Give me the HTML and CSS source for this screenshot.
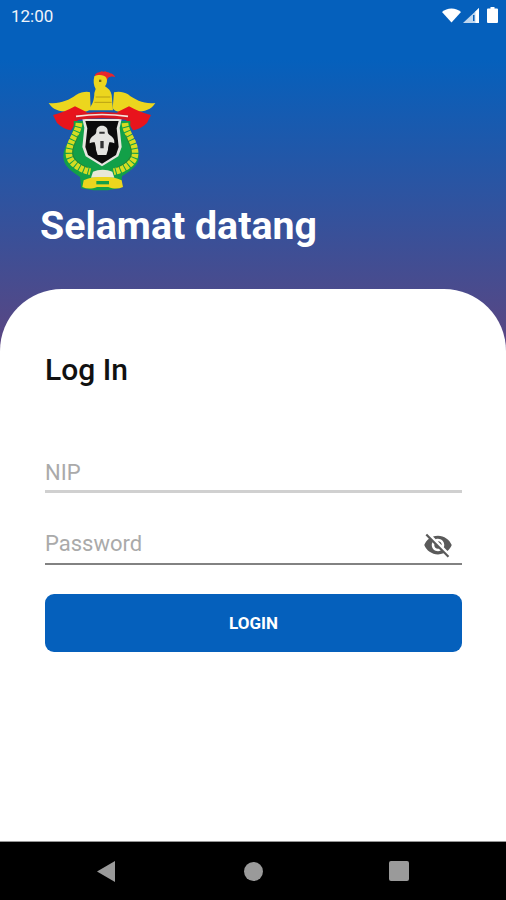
FILE: index.html
```html
<!DOCTYPE html>
<html>
<head>
   <meta charset="utf-8">
   <title>Selamat datang</title>
   <link rel="stylesheet" href="styles.css">
</head>
<body>
<div class="screen">

   <!-- status bar -->
   <div class="statusBar">
      <span class="clock">12:00</span>
      <span class="statusIcons">
         <svg class="wifi" width="19" height="15" viewBox="0 0 19 14"><path d="M0 3.500C2.500 1.200 5.800 0 9.500 0s7 1.200 9.500 3.500L9.500 14z" fill="#fff"/></svg>
         <svg class="signal" width="16" height="15" viewBox="0 0 16 15"><path d="M16 0v15H0z" fill="#fff" opacity=".75"/><path d="M16 0v15h-3.500V3.500z" fill="#fff"/><path d="M10 7h1.500v6H10z" fill="#0560bc"/></svg>
         <svg width="11" height="16" viewBox="0 0 11 16"><path d="M3.500 0h4v1.500H10a1 1 0 0 1 1 1V15a1 1 0 0 1-1 1H1a1 1 0 0 1-1-1V2.500a1 1 0 0 1 1-1h2.500z" fill="#fff"/></svg>
      </span>
   </div>

   <!-- logo and greeting -->
   <div class="hero">
      <svg class="crest" width="110" height="124" viewBox="50 25 330 372">
         <!-- rooster -->
         <path d="M193 47c6-10 16-8 20-12 6 2 8 2 12 0 6 4 10 2 14 6 6 0 12 4 16 12-8-4-16-2-22 2l-4 10-26-6z" fill="#e8262c"/>
         <path d="M192 50c10-6 30-6 36 4 4 8 2 18-4 26 10 6 18 14 20 26l4 46H172c14-14 20-32 20-52l4-12c-6-10-8-24-4-38z" fill="#ecd61e"/>
         <path d="M206 60h7v7h-7z" fill="#7a6a10"/>
         <path d="M196 112h44M192 128h52" stroke="#b8a014" stroke-width="3" fill="none"/>
         <!-- wings -->
         <path d="M55 130c32 4 60-8 82-24 14-8 32-12 42-8l2 48c-6 8-12 10-20 10l-48 0c-26 0-46-6-58-26z" fill="#ecd61e"/>
         <path d="M375 130c-32 4-60-8-82-26-12-8-30-10-42-6l-4 48c6 8 14 10 22 10h48c26 0 46-6 58-26z" fill="#ecd61e"/>
         <!-- ribbon -->
         <path d="M68 166c20-4 46-14 66-26l36 18-30 26-18 28c-14-2-30-10-42-22l-6-12z" fill="#e8141c"/>
         <path d="M362 166c-20-4-46-14-66-26l-36 18 30 26 18 28c14-2 30-10 42-22l6-12z" fill="#e8141c"/>
         <!-- green shield -->
         <path d="M130 184l170 0c-2 22 2 40 10 56 8 16 16 30 15 50 1 24-14 36-50 60l-2 34-40 8h-44l-36-6-4-34c-30-20-50-34-50-62 0-18 8-32 16-46 10-20 17-38 15-60z" fill="#12a048"/>
         <!-- wreaths -->
         <path d="M146 190c-2 32-32 56-30 94 2 28 36 46 64 52M284 190c2 32 32 56 30 94-2 28-36 46-64 52" fill="none" stroke="#d6dc22" stroke-width="20" stroke-dasharray="11 3"/>
         <path d="M144 226c-6 20-20 36-16 60 4 16 24 30 44 38M286 226c6 20 20 36 16 60-4 16-24 30-44 38" fill="none" stroke="#2e7a2a" stroke-width="2.500"/>
         <!-- black shield -->
         <path d="M156 178h118l-6 26 6 58-10 28-49 30-49-30-10-28 6-58z" fill="#e6e6e0"/>
         <path d="M165 184h100l-6 22 6 56-8 24-42 26-42-26-8-24 6-56z" fill="#0c0c0c"/>
         <path d="M215 198c11 0 18 8 17 17 0 6 3 10 7 12 9 5 14 12 13 24-6-3-10-4-15-3-2 8-4 14-4 22l-5 16h-26l-5-16c0-8-2-14-4-22-5-1-9 0-15 3-1-12 4-19 13-24 4-2 7-6 7-12-1-9 6-17 17-17z" fill="#e4e4e0"/>
         <path d="M207 216h16v6h-16zM210 244h10v22h-10z" fill="#333"/>
         <!-- band over the shield -->
         <path d="M132 166c50-12 116-12 166 0l-2 16c-48-8-112-8-162 0z" fill="#d81820"/>
         <path d="M137 170c50-7 106-7 156 0" fill="none" stroke="#f6e6dc" stroke-width="5"/>
         <!-- bottom ornament -->
         <path d="M188 336c16-8 42-8 58 0l6 18h-70z" fill="#e8e8d8"/>
         <path d="M160 362c16-8 30-10 42-10h30c12 0 26 2 42 10l4 20c-14 6-28 6-44 0h-34c-16 6-30 6-44 0z" fill="#ecd61e"/>
         <path d="M198 364h38v10h-38z" fill="#12a048"/>
      </svg>
      <h1 class="greeting">Selamat datang</h1>
   </div>

   <!-- login card -->
   <div class="card">
      <h2 class="cardTitle">Log In</h2>
      <div class="field fieldNip"><span class="hint">NIP</span></div>
      <div class="field fieldPassword">
         <span class="hint">Password</span>
         <svg width="30" height="30" viewBox="0 0 24 24"><path fill="#5a5a5a" d="M12 7c2.760 0 5 2.240 5 5 0 .650-.130 1.260-.360 1.830l2.920 2.920c1.510-1.260 2.700-2.890 3.430-4.750-1.730-4.390-6-7.500-11-7.500-1.400 0-2.740.250-3.980.700l2.160 2.160C10.740 7.130 11.350 7 12 7zM2 4.270l2.280 2.280.460.460C3.080 8.300 1.780 10.020 1 12c1.730 4.390 6 7.500 11 7.500 1.550 0 3.030-.300 4.380-.840l.420.420L19.730 22 21 20.730 3.270 3 2 4.270zM7.530 9.800l1.550 1.550c-.050.210-.080.430-.080.650 0 1.660 1.340 3 3 3 .220 0 .440-.030.650-.080l1.550 1.550c-.670.330-1.410.530-2.200.530-2.760 0-5-2.240-5-5 0-.790.200-1.530.530-2.200zm4.310-.780l3.150 3.150.020-.160c0-1.660-1.340-3-3-3l-.170.010z"/></svg>
      </div>
      <div class="loginBtn">LOGIN</div>
   </div>

   <!-- navigation bar -->
   <div class="navBar">
      <svg width="18" height="21" viewBox="0 0 18 21"><path d="M0 10.500L18 0v21z" fill="#9a9a9a"/></svg>
      <svg class="navHome" width="19" height="19" viewBox="0 0 19 19"><circle cx="9.500" cy="9.500" r="9.500" fill="#9a9a9a"/></svg>
      <svg width="20" height="20" viewBox="0 0 20 20"><rect width="20" height="20" rx="2" fill="#9a9a9a"/></svg>
   </div>

</div>
</body>
</html>
```

FILE: styles.css
```css
body {
   margin: 0px;
   padding: 0px;
   font-family: Roboto, "Liberation Sans", sans-serif;
}

.screen {
   display: flex;
   flex-direction: column;
   width: 506px;
   height: 900px;
   overflow: hidden;
   background: linear-gradient(180deg, rgb(5,96,188) 0px, rgb(5,96,188) 60px, rgb(90,70,130) 345px);
}

/* Status bar */
.statusBar {
   display: flex;
   justify-content: space-between;
   align-items: center;
   height: 30px;
   padding: 0 8px 0 11px;
   color: rgb(240,244,250);
   font-size: 17px;
}
.clock {
   padding-top: 2px;
}
.statusIcons {
   display: flex;
   align-items: center;
   gap: 8px;
}
.wifi {
   margin-right: -6px;
}

/* Logo and greeting */
.hero {
   height: 259px;
   padding-left: 40px;
}
.crest {
   display: block;
   margin: 38px 0 0 7px;
   filter: blur(0.5px);
}
.greeting {
   margin: 12px 0 0 0;
   color: rgb(255,255,255);
   font-size: 39.300px;
   line-height: 44px;
   font-weight: 700;
}

/* Login card */
.card {
   flex: 1;
   padding: 0 44px 0 45px;
   background-color: rgb(255,255,255);
   border-radius: 62px 62px 0 0;
}
.cardTitle {
   margin: 62px 0 0 0;
   color: rgb(17,17,17);
   font-size: 30px;
   line-height: 38px;
   font-weight: 500;
}
.field {
   display: flex;
   justify-content: space-between;
   align-items: center;
   height: 34px;
}
.fieldNip {
   margin-top: 67px;
   border-bottom: 3px solid rgb(208,208,208);
}
.fieldNip .hint {
   padding-bottom: 2px;
}
.fieldPassword {
   margin-top: 36px;
   border-bottom: 2px solid rgb(130,130,130);
}
.fieldPassword .hint {
   padding-bottom: 6px;
}
.fieldPassword svg {
   margin: 0 9px 2px 0;
}
.hint {
   color: rgb(170,170,170);
   font-size: 22px;
}
.loginBtn {
   display: flex;
   justify-content: center;
   align-items: center;
   height: 58px;
   margin-top: 29px;
   color: rgb(255,255,255);
   background-color: rgb(5,96,188);
   border-radius: 9px;
   font-size: 17px;
   font-weight: 700;
}

/* Navigation bar */
.navBar {
   display: flex;
   justify-content: space-between;
   align-items: center;
   height: 58px;
   padding: 0 97px;
   background-color: rgb(0,0,0);
   border-top: 1px solid rgb(150,150,150);
}
.navHome {
   margin-left: 2px;
}
```
